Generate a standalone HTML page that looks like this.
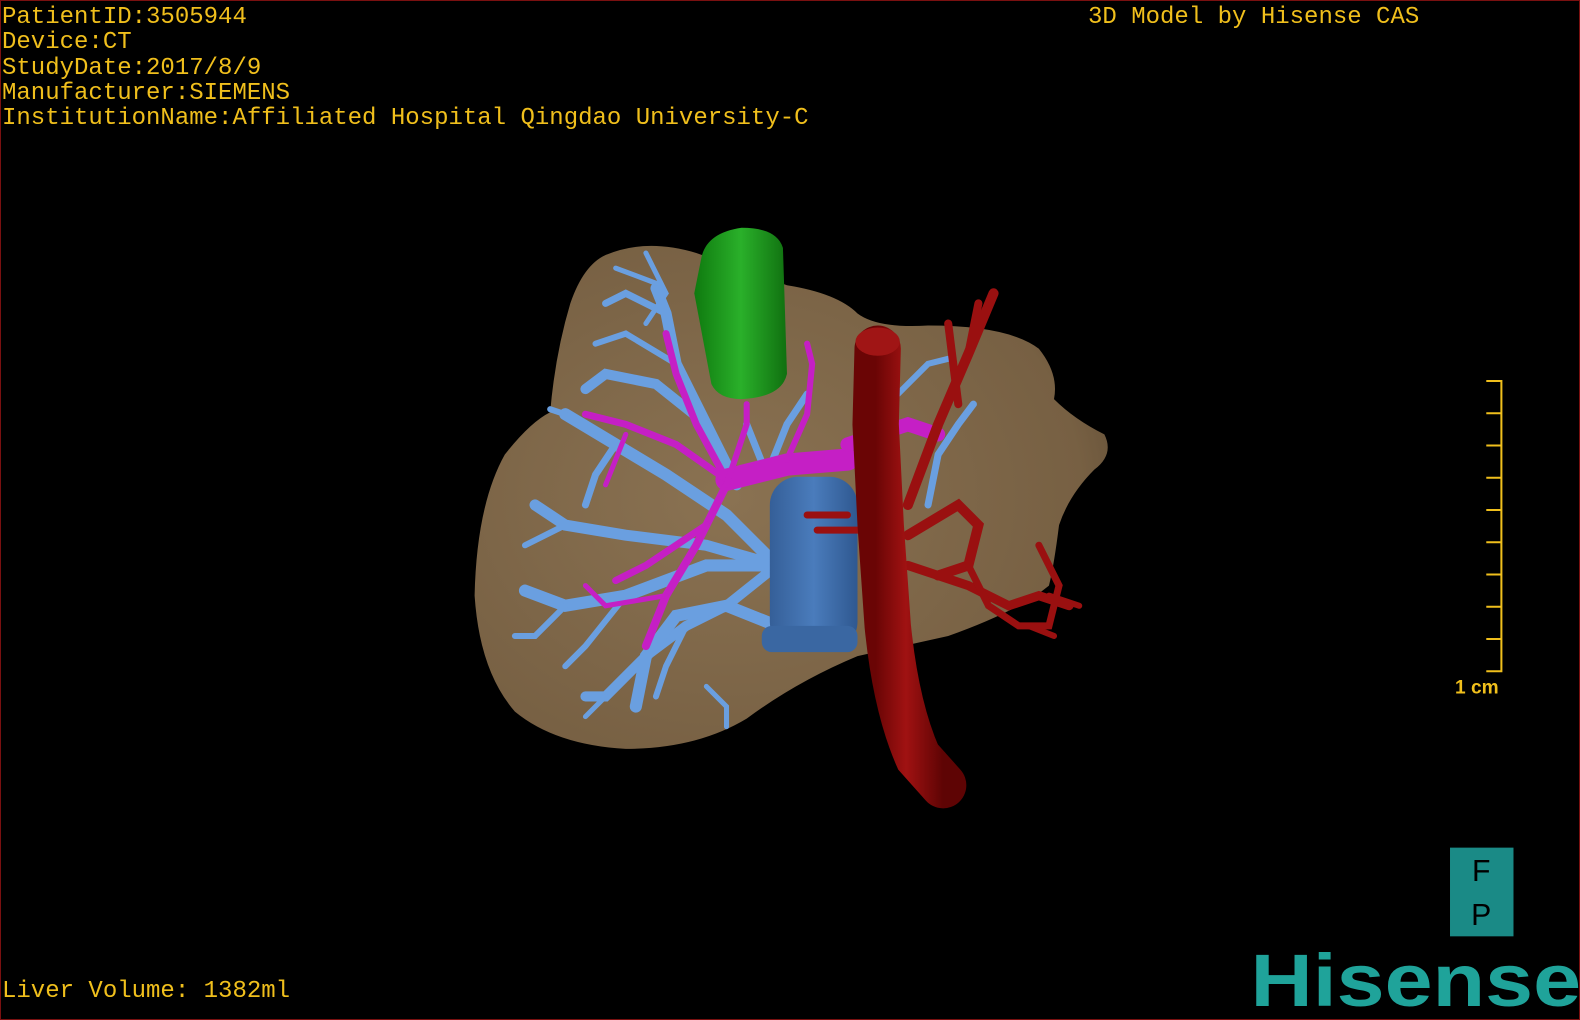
<!DOCTYPE html>
<html><head><meta charset="utf-8"><style>
html,body{margin:0;padding:0;background:#000;}
#s{position:relative;width:1580px;height:1020px;background:#000;overflow:hidden;box-sizing:border-box;border:1px solid #7a1010;}
.t{position:absolute;font-family:"Liberation Mono",monospace;font-size:24px;color:#f0bf1c;white-space:pre;line-height:25.3px;}
svg{position:absolute;left:0;top:0;}
</style></head><body><div id="s">
<svg width="1580" height="1020" viewBox="0 0 1568 1012" preserveAspectRatio="none">
<defs>
<radialGradient id="lv" cx="0.4" cy="0.5" r="0.7"><stop offset="0" stop-color="#8a7252"/><stop offset="0.8" stop-color="#776043"/><stop offset="1" stop-color="#5d4a33"/></radialGradient>
<linearGradient id="gr" x1="0" x2="1"><stop offset="0" stop-color="#0f7a0f"/><stop offset="0.5" stop-color="#2ab02a"/><stop offset="1" stop-color="#107010"/></linearGradient>
<linearGradient id="ao" x1="0" x2="1"><stop offset="0" stop-color="#6a0505"/><stop offset="0.45" stop-color="#a01212"/><stop offset="1" stop-color="#5e0404"/></linearGradient>
<linearGradient id="iv" x1="0" x2="1"><stop offset="0" stop-color="#355f98"/><stop offset="0.5" stop-color="#4a7cbc"/><stop offset="1" stop-color="#2f5890"/></linearGradient>
</defs>
<path fill="url(#lv)" d="M600,252 Q640,235 690,250 L780,282 Q830,290 850,310 Q870,325 920,322 Q1000,322 1030,345 Q1050,370 1045,395 Q1065,415 1095,430 Q1105,450 1085,465 Q1060,490 1050,520 Q1045,560 1040,580 Q1010,605 940,630 L850,650 Q790,675 740,712 Q690,742 620,742 Q550,738 510,705 Q475,665 470,590 Q472,500 500,450 Q525,418 545,408 Q550,350 565,300 Q578,262 600,252 Z"/>
<g fill="none" stroke="#6a9fe0" stroke-linecap="round">
<path stroke-width="12" d="M770,560 L720,510 L660,470 L610,440 L560,410"/>
<path stroke-width="11" d="M770,560 L700,540 L620,530 L560,520 L530,500"/>
<path stroke-width="12" d="M770,560 L700,560 L620,590 L560,600 L520,585"/>
<path stroke-width="10" d="M770,560 L720,600 L680,620 L640,650 L600,690 L580,690"/>
<path stroke-width="12" d="M770,620 L720,600 L670,610 L640,650 L630,700"/>
<path stroke-width="11" d="M730,480 L700,420 L670,360 L660,310 L650,285"/>
<path stroke-width="10" d="M700,420 L650,380 L600,370 L580,385"/>
<path stroke-width="7" d="M660,310 L620,290 L600,300"/>
<path stroke-width="6" d="M670,360 L620,330 L590,340"/>
<path stroke-width="7" d="M610,440 L590,470 L580,500"/>
<path stroke-width="6" d="M560,600 L530,630 L510,630"/>
<path stroke-width="6" d="M620,590 L580,640 L560,660"/>
<path stroke-width="6" d="M680,620 L660,660 L650,690"/>
<path stroke-width="6" d="M560,520 L520,540"/>
<path stroke-width="6" d="M560,410 L545,405"/>
<path stroke-width="5" d="M640,250 L660,290 L640,320 M610,265 L650,280"/>
<path stroke-width="7" d="M760,470 L780,420 L800,390 M760,470 L740,420"/>
<path stroke-width="7" d="M920,500 L930,450 L950,420 L965,400"/>
<path stroke-width="6" d="M890,390 L920,360 L940,355"/>
<path stroke-width="5" d="M700,680 L720,700 L720,720 M600,690 L580,710"/>
</g>
<g fill="none" stroke="#c51fc5" stroke-linecap="round">
<path stroke-width="22" d="M720,475 L780,460 L840,455"/>
<path stroke-width="14" d="M840,440 L900,420 L930,430"/>
<path stroke-width="7" d="M720,475 L670,440 L620,420 L580,410"/>
<path stroke-width="7" d="M720,475 L690,420 L670,370 L660,330"/>
<path stroke-width="8" d="M720,480 L690,540 L660,590 L640,640"/>
<path stroke-width="7" d="M700,520 L640,560 L610,575"/>
<path stroke-width="6" d="M780,455 L800,410 L805,360 L800,340"/>
<path stroke-width="6" d="M720,480 L740,420 L740,400"/>
<path stroke-width="5" d="M660,590 L600,600 L580,580 M620,430 L600,480"/>
</g>
<path fill="url(#gr)" d="M695,255 Q700,230 735,225 Q770,225 776,245 L780,370 Q775,393 735,395 Q712,395 705,380 L688,290 Z"/>
<rect x="763" y="472" width="87" height="172" rx="28" fill="url(#iv)"/>
<rect x="755" y="620" width="95" height="26" rx="10" fill="#3a67a2"/>
<g fill="none" stroke="#9a1010" stroke-linecap="round">
<path stroke-width="10" d="M900,500 L930,420 L960,350 L985,290"/>
<path stroke-width="8" d="M950,400 L940,320 M960,350 L970,300"/>
<path stroke-width="10" d="M900,530 L950,500 L970,520 L960,560 L930,570"/>
<path stroke-width="9" d="M900,560 L960,580 L1000,600 L1030,590 L1060,600"/>
<path stroke-width="7" d="M960,560 L980,600 L1010,620 L1040,620 L1050,580 L1030,540"/>
<path stroke-width="7" d="M810,525 L860,525 M800,510 L840,510"/>
<path stroke-width="6" d="M1020,620 L1045,630 M1040,590 L1070,600"/>
</g>
<path fill="none" stroke="url(#ao)" stroke-width="46" stroke-linecap="round" d="M870,345 L868,420 L873,520 L880,620 Q888,700 910,750 L935,778"/>
<ellipse cx="870" cy="338" rx="22" ry="14" fill="#a01515"/>
<g stroke="#f0bf1c" stroke-width="2" fill="none">
<path d="M1474,377 H1489 V665 H1474"/>
<path d="M1474,409 H1489 M1474,441 H1489 M1474,473 H1489 M1474,505 H1489 M1474,537 H1489 M1474,569 H1489 M1474,601 H1489 M1474,633 H1489"/>
</g>
<text x="1443" y="687" fill="#f0bf1c" font-family="Liberation Sans,sans-serif" font-size="19" font-weight="bold">1 cm</text>
<rect x="1438" y="840" width="63" height="88" fill="#1a8a86"/>
<text x="1469" y="873" fill="#000" font-family="Liberation Sans,sans-serif" font-size="30" text-anchor="middle">F</text>
<text x="1469" y="917" fill="#000" font-family="Liberation Sans,sans-serif" font-size="30" text-anchor="middle">P</text>
<text x="1240" y="997" fill="#1fa39a" font-family="Liberation Sans,sans-serif" font-size="74" font-weight="bold" textLength="328" lengthAdjust="spacingAndGlyphs">Hisense</text>
</svg>
<div class="t" style="left:1px;top:4px;">PatientID:3505944
Device:CT
StudyDate:2017/8/9
Manufacturer:SIEMENS
InstitutionName:Affiliated Hospital Qingdao University-C</div>
<div class="t" style="left:1087px;top:4px;">3D Model by Hisense CAS</div>
<div class="t" style="left:1px;top:978px;">Liver Volume: 1382ml</div>
</div></body></html>
